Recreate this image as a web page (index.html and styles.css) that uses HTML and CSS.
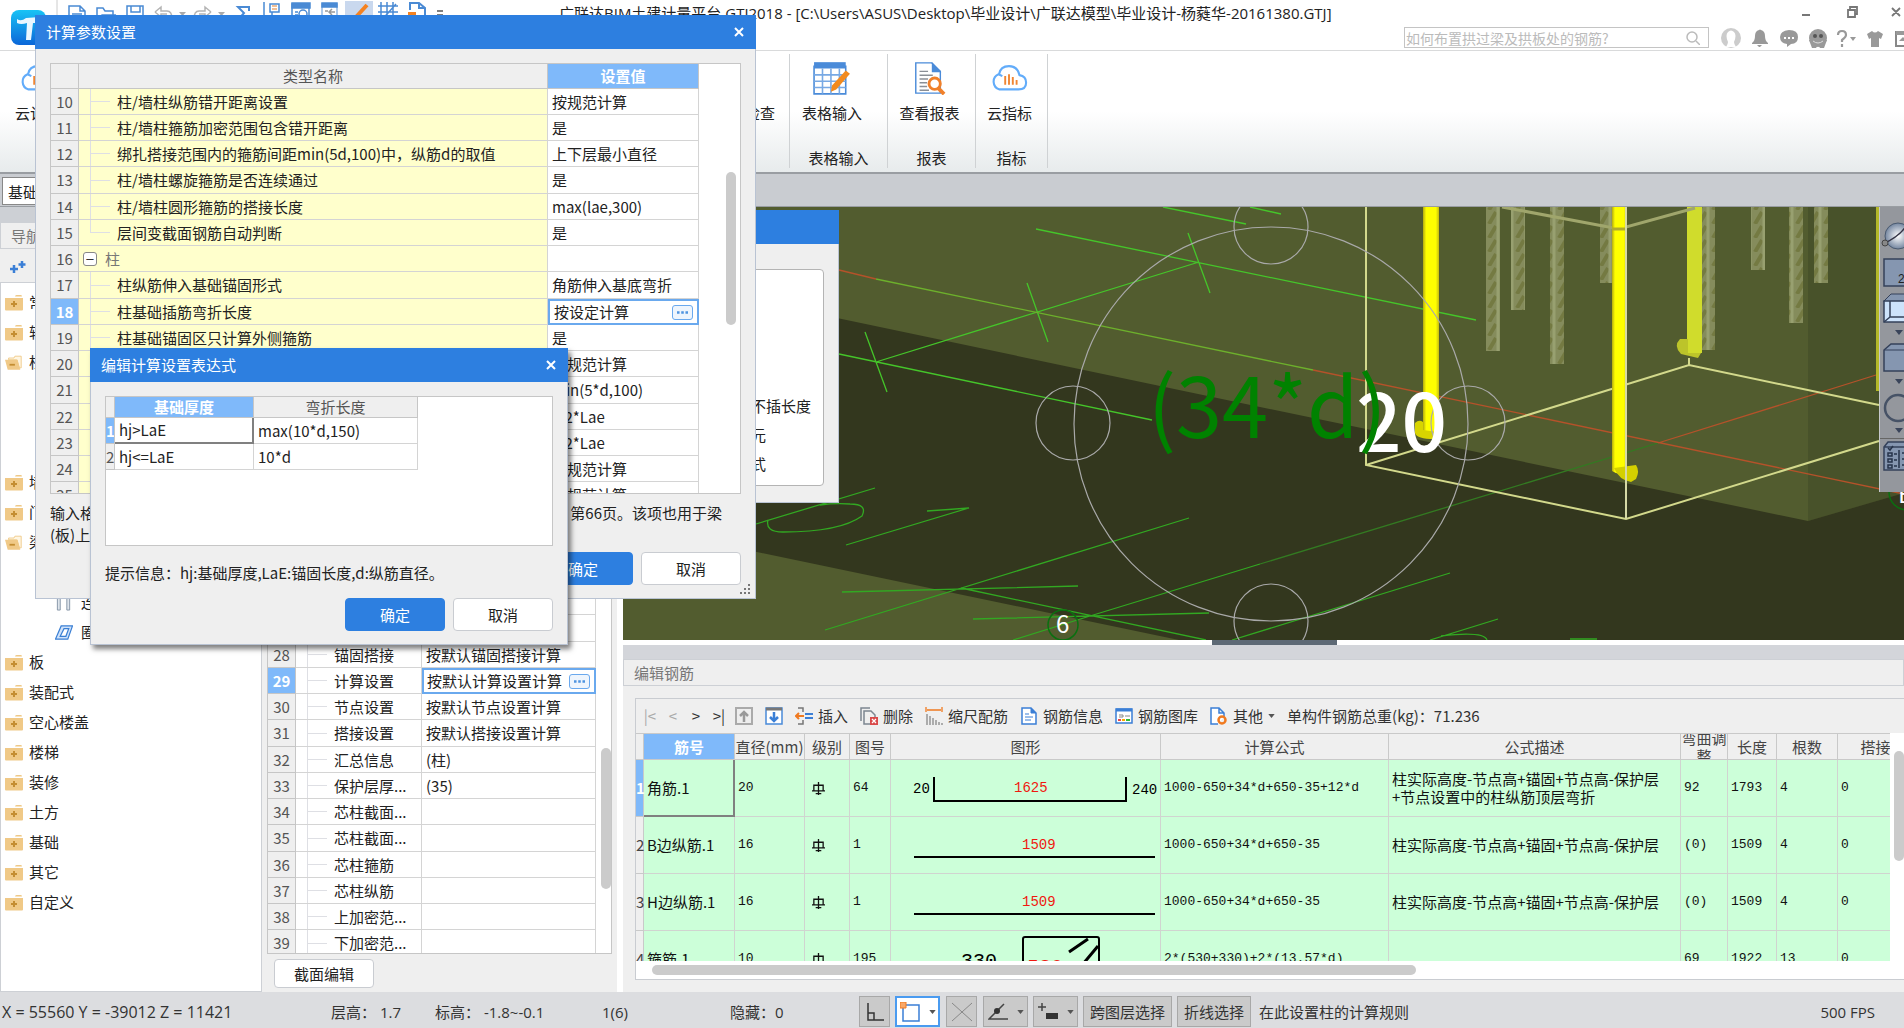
FILE: index.html
```html
<!DOCTYPE html>
<html lang="zh-CN">
<head>
    <meta charset="UTF-8">
    <meta name="viewport" content="width=device-width, initial-scale=1.0">
    <title>广联达BIM土建计量平台 GTJ2018</title>
    <link rel="stylesheet" href="styles.css">
</head>
<body>
    <svg class="defs" aria-hidden="true">
        <symbol id="folder" viewBox="0 0 18 16"><path d="M10 2q0-1.500 1.500-1.500h4.500q1 0 1 1.500z" fill="#efc988"/><path d="M0 3.500h18V15q0 1-1 1H1q-1 0-1-1z" fill="#f0c987"/><path d="M9 6.500v6M6 9.500h6" stroke="#c48d32" stroke-width="2"/></symbol>
        <symbol id="folder-open" viewBox="0 0 20 16"><path d="M4 3h6l1-2h7v13h-2L13 5H4z" fill="#fff6e2" stroke="#efc988"/><path d="M0 5h14l3 11H3z" fill="#f0c987"/><path d="M5 10.500h6" stroke="#c48d32" stroke-width="2"/></symbol>
        <symbol id="rebar" viewBox="0 0 14 14"><path d="M7 0v14M2 3.500h10v6H2zM0 9.500h14M4 12.500h6" fill="none" stroke="#111" stroke-width="1.400"/></symbol>
        <symbol id="caret" viewBox="0 0 8 5"><path d="M0 0h8L4 5z" fill="currentColor"/></symbol>
        <symbol id="dots" viewBox="0 0 13 3"><path d="M0 0h3v3H0zM5 0h3v3H5zM10 0h3v3h-3z" fill="#4f94e0"/></symbol>
        <symbol id="cloud" viewBox="0 0 40 28"><path d="M12 26H10A8.500 8.500 0 0 1 9 10Q11 11 13 12M9.500 10Q11 1.500 20 1.500T31 11Q38 12 38 19T30 26H11" fill="none" stroke="#62acfa" stroke-width="2.200"/><path d="M16 12v9M20 10v11M24 13v8M28 16v5" stroke="#f08532" stroke-width="2"/></symbol>
    </svg>

    <header class="titlebar">
        <svg class="logo" viewBox="0 0 35 35"><defs><linearGradient id="lg" x2="0" y2="1"><stop stop-color="#18c3f5"/><stop offset="1" stop-color="#0b66d8"/></linearGradient></defs><rect width="35" height="35" rx="8" fill="url(#lg)"/><path d="M6 9q4 3 9-1l14-1v6h-7l-2 17h-5l1-17q-6 2-10 0z" fill="#e9f6ff"/></svg>
        <svg class="quick" viewBox="56 0 390 30" fill="none" stroke="#4a8ad4" stroke-width="1.500">
            <path d="M57 0v30" stroke="#ccc" stroke-width="1"/>
            <path d="M69 6h11l5 5v12H69zM80 6v5h5M72 14h10"/>
            <path d="M97 22V8h6l2 3h8v4M97 22l5-7h13l-3 7z"/>
            <path d="M127 6h16v17h-16zM131 6v6h9V6"/>
            <path d="M155 12l6-5v4h6q5 0 5 8M155 12l6 5v-3h6M211 12l-6-5v4h-6q-5 0-5 8M211 12l-6 5v-3h-6" stroke="#b5b5b5"/>
            <path d="M179 12h7l-3.500 4zM218 12h7l-3.500 4z" fill="#aaa" stroke="none"/>
            <path d="M249 11V7h-11l6 6-6 7h11v-4" stroke-width="2"/>
            <path d="M264 2v24M270 4h9v8h-9zM272 12v8"/><path d="M272 6h5M272 9h5" stroke="#e08030" stroke-width="1.200"/>
            <path d="M292 4h17v18h-17z"/><path d="M292 3h18v5h-18z" fill="#4a8ad4"/><circle cx="303" cy="14" r="4"/><path d="M295 12h3M295 15h3"/>
            <path d="M322 4h15v18h-15z" stroke="#92b8e2"/><path d="M322 3h15v4h-15z" fill="#4a8ad4"/><path d="M330 12h5M325 11h3M332 9l-3 3 3 3" stroke="#999"/>
            <path d="M345 1h28v28h-28z" fill="#c9d8ee" stroke="none"/><path d="M367 5L356 17" stroke="#f58220" stroke-width="4"/>
            <path d="M381 2v24M387 2v24M393 2v24M378 6h20M378 12h20M380 22L396 4"/>
            <path d="M410 10V3h9l6 5v12M419 3v5h6" stroke-width="2"/><path d="M408 12h8v6h-8z" fill="#f58220" stroke="none"/>
            <path d="M437 11h6M437 15h6" stroke="#555"/>
        </svg>
        <h1>广联达BIM土建计量平台 GTJ2018 - [C:\Users\ASUS\Desktop\毕业设计\广联达模型\毕业设计-杨蕤华-20161380.GTJ]</h1>
        <div class="window-tools">
            <svg class="winctl" viewBox="1800 5 104 14" fill="none" stroke="#777" stroke-width="1.800"><path d="M1802 15h8M1848 10h7v7h-7zM1850 10V7h7v7h-2M1892 8l8 8M1900 8l-8 8"/></svg>
            <div class="tool-row">
                <form class="search"><input type="text" aria-label="搜索" placeholder="如何布置拱过梁及拱板处的钢筋?"><svg viewBox="0 0 14 14" fill="none" stroke="#bbb" stroke-width="1.500"><circle cx="6" cy="6" r="5"/><path d="M10 10l4 4"/></svg></form>
                <svg class="account" viewBox="1720 26 184 23" fill="#999">
                    <circle cx="1731" cy="37" r="10" fill="#ccc"/><path d="M1726 46q2-3 2-5-3-7 0-10 3-3 6 0 3 3 0 10 0 2 2 5z" fill="#fff"/>
                    <path d="M1752 42q3-2 3-7 0-5 4-6 1-1 2 0 4 1 4 6 0 5 3 7v1h-16zM1757 44h5l-2 2h-1z"/>
                    <path d="M1789 29q9 0 9 7t-7 7l-4 3v-3q-7-1-7-7t9-7z"/><path d="M1784 37h2M1788 37h2M1792 37h2" stroke="#fff" stroke-width="2"/>
                    <circle cx="1818" cy="37" r="9"/><path d="M1809 39h18l-3 8h-4l-2-3-2 3h-4z"/><circle cx="1815" cy="35" r="2" fill="#555"/><circle cx="1821" cy="35" r="2" fill="#555"/><path d="M1813 40q5 4 10 0" stroke="#ddd" fill="none"/>
                    <path d="M1838 34q0-4 4-4t4 4q0 2-4 5v2M1842 43v3" fill="none" stroke="#999" stroke-width="2.200"/><path d="M1850 36h6l-3 4z"/>
                    <path d="M1867 33l5-3q3 3 6 0l5 3-2 5-2-1v9h-8v-9l-2 1z"/>
                    <path d="M1896 31h16v14h-16z" fill="none" stroke="#888" stroke-width="2"/><path d="M1896 30h10v4h-10zM1899 40l4-4 4 4z"/>
                </svg>
            </div>
        </div>
    </header>

    <nav class="ribbon">
        <section class="group first">
            <button class="cmd"><svg class="ico"><use href="#cloud"/></svg><span>云计算</span></button>
            <button class="cmd"><span>云检查</span></button>
        </section>
        <section class="group wide">
            <button class="cmd"><svg class="ico" viewBox="0 0 36 32"><path d="M1 5h30v26H1z" fill="#fff" stroke="#4a8bd9" stroke-width="1.500"/><path d="M1 1h30v6H1z" fill="#4a8bd9"/><path d="M1 13h30M1 19h30M1 25h30M9 7v24M17 7v24M25 7v24" stroke="#78a9e4" stroke-width="1.500"/><path d="M31 9l4 3-13 15-5 2 1-6z" fill="#f28a1e"/></svg><span>表格输入</span></button>
            <h2>表格输入</h2>
        </section>
        <section class="group mid">
            <button class="cmd"><svg class="ico" viewBox="0 0 36 36"><path d="M4 2h17l9 9v23H4z" fill="#fff" stroke="#4a8bd9" stroke-width="1.500"/><path d="M21 1v11h10z" fill="#4a8bd9"/><path d="M8 11h9M8 15h14M8 19h9M8 23h8M8 27h8M8 31h10" stroke="#8a8f96" stroke-width="1.500"/><circle cx="24" cy="24" r="6" fill="#fff" stroke="#f0802a" stroke-width="3"/><path d="M28 29l6 6" stroke="#f0802a" stroke-width="4"/></svg><span>查看报表</span></button>
            <h2>报表</h2>
        </section>
        <section class="group last">
            <button class="cmd"><svg class="ico"><use href="#cloud"/></svg><span>云指标</span></button>
            <h2>指标</h2>
        </section>
    </nav>

    <div class="floor-bar"><select aria-label="楼层"><option>基础层</option></select></div>

    <main class="workspace">
        <aside class="nav-tree">
            <h2 class="panel-title">导航树</h2>
            <div class="nav-tools"><svg viewBox="0 0 16 12"><path d="M4 4v8M0 8h8M12 0v7M8.500 3.500h7" stroke="#3b7fd6" stroke-width="2.500"/></svg></div>
            <ul>
                <li><svg><use href="#folder"/></svg>常用</li>
                <li><svg><use href="#folder"/></svg>轴线</li>
                <li><svg><use href="#folder-open"/></svg>柱</li>
                <li class="child">柱</li>
                <li class="child">构造柱</li>
                <li class="child">砌体柱</li>
                <li><svg><use href="#folder"/></svg>墙</li>
                <li><svg><use href="#folder"/></svg>门窗洞</li>
                <li><svg><use href="#folder-open"/></svg>梁</li>
                <li class="child">梁</li>
                <li class="child"><svg viewBox="0 0 18 18"><path d="M2 0h3v17H2zM12 0h3v17h-3z" fill="#dfe5ec" stroke="#8494a6"/></svg>连梁</li>
                <li class="child"><svg viewBox="0 0 18 18"><path d="M6 2h12l-5 14H0zM9 5h5l-3 8H5z" fill="#cfe2fa" fill-rule="evenodd" stroke="#3a7fd4" stroke-width="1.300"/></svg>圈梁</li>
                <li><svg><use href="#folder"/></svg>板</li>
                <li><svg><use href="#folder"/></svg>装配式</li>
                <li><svg><use href="#folder"/></svg>空心楼盖</li>
                <li><svg><use href="#folder"/></svg>楼梯</li>
                <li><svg><use href="#folder"/></svg>装修</li>
                <li><svg><use href="#folder"/></svg>土方</li>
                <li><svg><use href="#folder"/></svg>基础</li>
                <li><svg><use href="#folder"/></svg>其它</li>
                <li><svg><use href="#folder"/></svg>自定义</li>
            </ul>
        </aside>

        <aside class="props">
            <div class="props-grid">
                <table class="sheet">
                    <colgroup><col class="p0"><col class="p1"><col class="p2"></colgroup>
                    <tbody>
                        <tr><th></th><td></td><td></td></tr>
                        <tr><th></th><td></td><td></td></tr>
                        <tr><th></th><td></td><td></td></tr>
                        <tr><th>27</th><td></td><td></td></tr>
                        <tr><th>28</th><td class="leaf">锚固搭接</td><td>按默认锚固搭接计算</td></tr>
                        <tr class="active"><th>29</th><td class="leaf">计算设置</td><td class="edit"><div><span>按默认计算设置计算</span><button class="more" aria-label="更多"><svg><use href="#dots"/></svg></button></div></td></tr>
                        <tr><th>30</th><td class="leaf">节点设置</td><td>按默认节点设置计算</td></tr>
                        <tr><th>31</th><td class="leaf">搭接设置</td><td>按默认搭接设置计算</td></tr>
                        <tr><th>32</th><td class="leaf">汇总信息</td><td>(柱)</td></tr>
                        <tr><th>33</th><td class="leaf">保护层厚...</td><td>(35)</td></tr>
                        <tr><th>34</th><td class="leaf">芯柱截面...</td><td></td></tr>
                        <tr><th>35</th><td class="leaf">芯柱截面...</td><td></td></tr>
                        <tr><th>36</th><td class="leaf">芯柱箍筋</td><td></td></tr>
                        <tr><th>37</th><td class="leaf">芯柱纵筋</td><td></td></tr>
                        <tr><th>38</th><td class="leaf">上加密范...</td><td></td></tr>
                        <tr><th>39</th><td class="leaf">下加密范...</td><td></td></tr>
                    </tbody>
                </table>
                <div class="vtrack"><i></i></div>
            </div>
            <div class="props-foot"><button class="btn small">截面编辑</button></div>
        </aside>

        <div class="right">
            <div class="view">
                <svg class="scene" viewBox="623 207 1281 433" preserveAspectRatio="xMidYMid slice">
                    <defs>
                        <linearGradient id="bar"><stop stop-color="#b4aa10"/><stop offset=".2" stop-color="#ff0"/><stop offset=".8" stop-color="#ff0"/><stop offset="1" stop-color="#c4ba10"/></linearGradient>
                        <pattern id="rib" width="14" height="14" patternUnits="userSpaceOnUse" x="1486"><path d="M0 0h14v14H0z" fill="#858c5c"/><path d="M3 14L10 2" stroke="#747a42" stroke-width="4"/><path d="M12 0v14" stroke="#98a070" stroke-width="3"/></pattern>
                    </defs>
                    <path d="M623 207h1281v433H623z" fill="#525c2f"/>
                    <path d="M1808 207h96v286l-96 28z" fill="#48522a"/>
                    <path d="M623 273L1260 407 1808 521 1904 493V640H1179L623 524z" fill="#33371e"/>
                    <g fill="url(#rib)">
                        <path d="M1486 207h14v144h-14zM1511 207h14v103h-14zM1550 207h14v157h-14zM1600 207h12v76h-12zM1702 207h13v143h-13zM1751 207h14v63h-14zM1789 207h14v116h-14zM1814 207h14v76h-14z"/>
                    </g>
                    <g fill="none" stroke="#45c52a" stroke-width="1.300">
                        <path d="M1163 207L1246 224M1250 207L1281 214M1036 229L1476 320M1188 233L1210 293M876 362L1199 262M1027 283L1048 342M865 332L887 392M839 354L1152 420"/>
                        <path d="M876 279L1313 370" stroke="#6db02c"/>
                    </g>
                    <g fill="none" stroke="#32a822" stroke-width="1.300">
                        <path d="M756 524L875 488M768 520Q765 532 783 532Q840 532 862 516Q868 504 850 504Q835 503 820 505M846 545L969 508 927 511M825 630L1189 518M842 592L1078 586M961 588L1206 640M973 619L1209 613M1013 640L1090 616 1260 564M1232 640L1450 573M1430 640L1498 619M1441 636Q1484 631 1487 640M1570 639h27"/>
                        <path d="M1260 564L1658 443" stroke="#337a22"/>
                    </g>
                    <path d="M839 270L876 279M1313 370L1904 494M1658 443L1876 375" fill="none" stroke="#b5522a" stroke-width="1.300"/>
                    <path d="M1876 207h3v184h-3z" fill="#b4b82a"/>
                    <path d="M1687 207h15v146h-15z" fill="#d0dc2c"/><path d="M1680 339h8v14h13l-3 5-17-4q-8-8-1-15z" fill="#bcc42a"/>
                    <path d="M1423 207h16v230h-16z" fill="url(#bar)"/><path d="M1415 423q4-4 8-1v8l14 2-3 7q-17 0-19-6z" fill="#d8d400"/>
                    <g fill="none" stroke="#d3d98c" stroke-width="2">
                        <path d="M1366 207V465L1626 519 1879 441M1366 465L1689 365 1879 405M1689 358v7"/>
                    </g>
                    <path d="M1502 207L1619 229 1695 208" fill="none" stroke="#a0a66c" stroke-width="3"/>
                    <path d="M1612 207h15v265q-8 4-15-1z" fill="url(#bar)"/><path d="M1614 468l22-3q4 6 0 14l-5 3q-12-2-17-14z" fill="#d4d000"/>
                    <path d="M1612 229h14" stroke="#b0aa30" stroke-width="3"/>
                    <path d="M1626 207v312" stroke="#d6d9a6" stroke-width="2"/>
                    <g fill="none" stroke="#a9a9a9" stroke-width="1.200"><circle cx="1271" cy="424" r="197"/><circle cx="1073" cy="423" r="37"/><circle cx="1468" cy="423" r="37"/><circle cx="1271" cy="227" r="37"/><circle cx="1271" cy="621" r="37"/></g>
                    <circle cx="1063" cy="625" r="15" fill="none" stroke="#0a7010" stroke-width="1.500"/>
                    <circle cx="1907" cy="492" r="18" fill="none" stroke="#0a7010" stroke-width="1.500"/>
                    <text x="1356" y="452" class="dim white">20</text>
                    <text x="1148" y="438" class="dim green">(34*d)</text>
                    <text x="1056" y="633" class="axis">6</text>
                    <text x="1898" y="503" class="axis">B</text>
                </svg>
                <div class="palette">
                    <button aria-label="动态观察"><svg viewBox="0 0 40 34"><defs><radialGradient id="ball"><stop stop-color="#fff"/><stop offset="1" stop-color="#7486a0"/></radialGradient></defs><circle cx="18" cy="16" r="13" fill="url(#ball)" stroke="#4a5a70"/><path d="M3 24Q20 16 26 6" stroke="#334" fill="none" stroke-width="1.500"/><circle cx="5" cy="23" r="3" fill="#888" stroke="#444"/></svg></button>
                    <button aria-label="二维"><svg viewBox="0 0 40 34"><path d="M4 3h32v27H4z" fill="#8596b0" stroke="#34415a" stroke-width="1.500"/><text x="18" y="27" class="pal-text">2D</text></svg></button>
                    <button aria-label="视图"><svg viewBox="0 0 40 34"><path d="M4 9l7-7h30v8H4z" fill="#8596b0" stroke="#34415a"/><path d="M4 9h36v21H4z" fill="#cde3fb" stroke="#34415a" stroke-width="1.500"/><path d="M10 9v16h30M4 30l6-5" fill="none" stroke="#34415a" stroke-width="1.500"/></svg><svg class="tri"><use href="#caret"/></svg></button>
                    <button aria-label="着色"><svg viewBox="0 0 40 34"><path d="M4 9l7-6h30v27H4z" fill="#8596b0" stroke="#34415a" stroke-width="1.500"/><path d="M4 9h36" stroke="#34415a"/></svg><svg class="tri"><use href="#caret"/></svg></button>
                    <button aria-label="旋转"><svg viewBox="0 0 40 34"><circle cx="18" cy="18" r="13" fill="none" stroke="#465266" stroke-width="2.500"/></svg><svg class="tri"><use href="#caret"/></svg></button>
                    <button class="split" aria-label="显示设置"><svg viewBox="0 0 40 34"><path d="M4 7l4-5h32v28H4zM4 7h36" fill="#8596b0" stroke="#34415a" stroke-width="1.500"/><path d="M8 13h4v3H8zM8 19h4v3H8zM8 25h4v3H8zM14 14h3M14 20h3M14 26h3M19 10v18M22 13h4M22 19h4M22 25h4M8 8l2 2 3-4" fill="none" stroke="#26334a" stroke-width="1.500"/></svg></button>
                </div>
            </div>
            <div class="splitter"><i></i></div>

            <section class="rebar-panel">
                <h2 class="panel-title">编辑钢筋</h2>
                <div class="rebar-box">
                    <div class="rebar-tools">
                        <div class="steps"><button class="off" aria-label="首条">|&lt;</button><button class="off" aria-label="上一条">&lt;</button><button aria-label="下一条">&gt;</button><button aria-label="末条">&gt;|</button></div>
                        <button aria-label="上移"><svg viewBox="0 0 18 18"><path d="M1 1h16v16H1z" fill="#eee" stroke="#aaa" stroke-width="2"/><path d="M9 15V6M5 9l4-4 4 4" fill="none" stroke="#999" stroke-width="2.500"/></svg></button>
                        <button aria-label="下移"><svg viewBox="0 0 18 18"><path d="M1 1h16v16H1z" fill="#fff" stroke="#4a8bd9" stroke-width="1.500"/><path d="M1 2h16" stroke="#777" stroke-width="3"/><path d="M9 5v9M5 10l4 4 4-4" fill="none" stroke="#3b7fd6" stroke-width="2.500"/></svg></button>
                        <button><svg viewBox="0 0 18 18"><path d="M3 1h5v4M3 17h5v-4" fill="none" stroke="#777" stroke-width="1.500"/><path d="M1 9h8M4 6L1 9l3 3" fill="none" stroke="#f07a20" stroke-width="2"/><path d="M10 7h8M10 11h8" stroke="#3b7fd6" stroke-width="2"/></svg>插入</button>
                        <button><svg viewBox="0 0 18 18"><path d="M1 14V1h9M4 4h7l4 4v9H4z" fill="none" stroke="#7d8791" stroke-width="1.500"/><path d="M10 10h8v8h-8z" fill="#d94a4a"/><path d="M12 12l4 4M16 12l-4 4" stroke="#fff" stroke-width="1.300"/></svg>删除</button>
                        <button><svg viewBox="0 0 18 18"><path d="M1 0v5M17 0v5M2 3h14" stroke="#f07a20" stroke-width="1.300"/><path d="M2 7v11M5 9v9M8 11v7M11 13v5M14 15v3M17 16v2" stroke="#888" stroke-width="1.300"/></svg>缩尺配筋</button>
                        <button><svg viewBox="0 0 18 18"><path d="M2 1h9l5 5v11H2z" fill="#fff" stroke="#3b7fd6" stroke-width="1.500"/><path d="M11 1v5h5zM5 7h4M5 10h8M5 13h6" stroke="#3b7fd6" fill="#3b7fd6"/></svg>钢筋信息</button>
                        <button><svg viewBox="0 0 18 18"><path d="M1 2h16v14H1z" fill="#fff" stroke="#3b7fd6" stroke-width="1.500"/><path d="M1 3h16" stroke="#3b7fd6" stroke-width="3"/><path d="M4 8h4v2H4M10 9h5" stroke="#888" fill="none"/><path d="M3 13h3" stroke="#e44" stroke-width="2"/><path d="M7 13h3" stroke="#fa0" stroke-width="2"/><path d="M11 13h4" stroke="#3b3" stroke-width="2"/></svg>钢筋图库</button>
                        <button><svg viewBox="0 0 18 18"><path d="M8 17H1V1h8l5 5v4M9 1v5h5" fill="#fff" stroke="#3b7fd6" stroke-width="1.500"/><circle cx="12" cy="13" r="3.500" fill="none" stroke="#f07a20" stroke-width="2.500"/></svg>其他<svg class="caret"><use href="#caret"/></svg></button>
                        <span>单构件钢筋总重(kg)：71.236</span>
                    </div>
                    <div class="rebar-scroll">
                        <div class="clip">
                            <table class="rebar">
                                <colgroup><col class="c0"><col class="c1"><col class="c2"><col class="c3"><col class="c4"><col class="c5"><col class="c6"><col class="c7"><col class="c8"><col class="c9"><col class="c10"><col class="c11"></colgroup>
                                <thead><tr><th></th><th class="on">筋号</th><th>直径(mm)</th><th>级别</th><th>图号</th><th>图形</th><th>计算公式</th><th>公式描述</th><th><div class="two">弯曲调整</div></th><th>长度</th><th>根数</th><th>搭接</th></tr></thead>
                                <tbody>
                                    <tr><th class="on">1</th><td class="cur">角筋.1</td><td class="num">20</td><td><svg class="grade"><use href="#rebar"/></svg></td><td class="num">64</td>
                                        <td class="shape"><svg viewBox="890 759 270 56"><path d="M933 776v24h192v-24" fill="none" stroke="#000" stroke-width="2"/><text x="912" y="792">20</text><text x="1013" y="791" class="red">1625</text><text x="1131" y="793">240</text></svg></td>
                                        <td class="num">1000-650+34*d+650-35+12*d</td><td class="desc">柱实际高度-节点高+锚固+节点高-保护层<br>+节点设置中的柱纵筋顶层弯折</td><td class="num">92</td><td class="num">1793</td><td class="num">4</td><td class="num">0</td></tr>
                                    <tr><th>2</th><td>B边纵筋.1</td><td class="num">16</td><td><svg class="grade"><use href="#rebar"/></svg></td><td class="num">1</td>
                                        <td class="shape"><svg viewBox="890 817 270 56"><path d="M913 857h241" stroke="#000" stroke-width="2"/><text x="1021" y="849" class="red">1509</text></svg></td>
                                        <td class="num">1000-650+34*d+650-35</td><td class="desc">柱实际高度-节点高+锚固+节点高-保护层</td><td class="num">(0)</td><td class="num">1509</td><td class="num">4</td><td class="num">0</td></tr>
                                    <tr><th>3</th><td>H边纵筋.1</td><td class="num">16</td><td><svg class="grade"><use href="#rebar"/></svg></td><td class="num">1</td>
                                        <td class="shape"><svg viewBox="890 817 270 56"><path d="M913 857h241" stroke="#000" stroke-width="2"/><text x="1021" y="849" class="red">1509</text></svg></td>
                                        <td class="num">1000-650+34*d+650-35</td><td class="desc">柱实际高度-节点高+锚固+节点高-保护层</td><td class="num">(0)</td><td class="num">1509</td><td class="num">4</td><td class="num">0</td></tr>
                                    <tr><th>4</th><td>箍筋.1</td><td class="num">10</td><td><svg class="grade"><use href="#rebar"/></svg></td><td class="num">195</td>
                                        <td class="shape"><svg viewBox="890 931 270 56"><rect x="1022" y="937" width="76" height="48" rx="2" fill="none" stroke="#000" stroke-width="2"/><path d="M1087 939L1068 952M1097 946L1082 964" stroke="#000" stroke-width="3"/><text x="960" y="967" class="big">330</text><text x="1026" y="973" class="big red">530</text></svg></td>
                                        <td class="num">2*(530+330)+2*(13.57*d)</td><td></td><td class="num">69</td><td class="num">1922</td><td class="num">13</td><td class="num">0</td></tr>
                                </tbody>
                            </table>
                        </div>
                        <div class="vtrack"><i></i></div>
                    </div>
                    <div class="htrack"><i></i></div>
                </div>
            </section>
        </div>
    </main>

    <footer class="status">
        <span class="coords">X = 55560 Y = -39012 Z = 11421</span>
        <span class="floor">层高： 1.7</span>
        <span class="level">标高： -1.8~-0.1</span>
        <span class="count">1(6)</span>
        <span class="hidden-count">隐藏：0</span>
        <div class="modes">
            <button aria-label="正交"><svg viewBox="0 0 20 20" fill="none" stroke="#333" stroke-width="1.500"><path d="M3 1v17h16M3 11h6v7"/></svg></button>
            <button class="on" aria-label="捕捉"><svg viewBox="0 0 20 20"><path d="M3 3h16v16H3z" fill="#fff" stroke="#3b7fd6" stroke-width="1.500"/><path d="M0 0h6v6H0z" fill="#f9a869" stroke="#f07a20"/></svg><svg class="caret"><use href="#caret"/></svg></button>
            <button class="dim-btn" aria-label="交点"><svg viewBox="0 0 20 20"><path d="M0 1l20 18M20 1L0 19" stroke="#888"/></svg></button>
            <button aria-label="角度"><svg viewBox="0 0 20 20"><path d="M16 2L1 17h19" fill="none" stroke="#444" stroke-width="1.500"/><circle cx="9" cy="9" r="3" fill="#333"/></svg><svg class="caret"><use href="#caret"/></svg></button>
            <button aria-label="偏移"><svg viewBox="0 0 20 20"><path d="M4 1v8M0 5h8" stroke="#444" stroke-width="1.500"/><path d="M8 11h12v6H8z" fill="#333"/></svg><svg class="caret"><use href="#caret"/></svg></button>
            <button class="word">跨图层选择</button>
            <button class="word">折线选择</button>
        </div>
        <span class="tip">在此设置柱的计算规则</span>
        <span class="fps">500 FPS</span>
    </footer>

    <section class="dialog back">
        <header><h2>输出设置</h2></header>
        <div class="frame"><p>不插长度</p><p>元</p><p>式</p></div>
    </section>

    <section class="dialog params">
        <header><h2>计算参数设置</h2><button class="close" aria-label="关闭"><svg viewBox="0 0 10 10"><path d="M1 1l8 8M9 1l-8 8" stroke="#fff" stroke-width="2"/></svg></button></header>
        <div class="params-grid">
            <table class="sheet yellow">
                <thead><tr><th></th><th>类型名称</th><th class="on">设置值</th></tr></thead>
                <tbody>
                    <tr><th>10</th><td class="leaf">柱/墙柱纵筋错开距离设置</td><td>按规范计算</td></tr>
                    <tr><th>11</th><td class="leaf">柱/墙柱箍筋加密范围包含错开距离</td><td>是</td></tr>
                    <tr><th>12</th><td class="leaf">绑扎搭接范围内的箍筋间距min(5d,100)中，纵筋d的取值</td><td>上下层最小直径</td></tr>
                    <tr><th>13</th><td class="leaf">柱/墙柱螺旋箍筋是否连续通过</td><td>是</td></tr>
                    <tr><th>14</th><td class="leaf">柱/墙柱圆形箍筋的搭接长度</td><td>max(lae,300)</td></tr>
                    <tr><th>15</th><td class="leaf end">层间变截面钢筋自动判断</td><td>是</td></tr>
                    <tr><th>16</th><td class="branch"><i>−</i>柱</td><td></td></tr>
                    <tr><th>17</th><td class="leaf">柱纵筋伸入基础锚固形式</td><td>角筋伸入基底弯折</td></tr>
                    <tr class="active"><th>18</th><td class="leaf">柱基础插筋弯折长度</td><td class="edit"><div><span>按设定计算</span><button class="more" aria-label="更多"><svg><use href="#dots"/></svg></button></div></td></tr>
                    <tr><th>19</th><td class="leaf">柱基础锚固区只计算外侧箍筋</td><td>是</td></tr>
                    <tr><th>20</th><td class="leaf"></td><td>按规范计算</td></tr>
                    <tr><th>21</th><td class="leaf"></td><td>min(5*d,100)</td></tr>
                    <tr><th>22</th><td class="leaf"></td><td>1.2*Lae</td></tr>
                    <tr><th>23</th><td class="leaf"></td><td>1.2*Lae</td></tr>
                    <tr><th>24</th><td class="leaf"></td><td>按规范计算</td></tr>
                    <tr><th>25</th><td class="leaf"></td><td>按规范计算</td></tr>
                </tbody>
            </table>
            <div class="vtrack"><i></i></div>
        </div>
        <p class="note"><span>输入格式<br>(板)上部</span><span>第66页。该项也用于梁</span></p>
        <div class="actions"><button class="btn primary">确定</button><button class="btn">取消</button></div>
        <svg class="grip" viewBox="0 0 11 11" fill="#777"><path d="M8 0h2v2H8zM8 4h2v2H8zM8 8h2v2H8zM4 4h2v2H4zM4 8h2v2H4zM0 8h2v2H0z"/></svg>
    </section>

    <section class="dialog expr">
        <header><h2>编辑计算设置表达式</h2><button class="close" aria-label="关闭"><svg viewBox="0 0 10 10"><path d="M1 1l8 8M9 1l-8 8" stroke="#fff" stroke-width="2"/></svg></button></header>
        <div class="expr-grid">
            <table class="sheet">
                <thead><tr><th></th><th class="on">基础厚度</th><th>弯折长度</th></tr></thead>
                <tbody>
                    <tr><th class="on">1</th><td class="cur">hj&gt;LaE</td><td>max(10*d,150)</td></tr>
                    <tr><th>2</th><td>hj&lt;=LaE</td><td>10*d</td></tr>
                </tbody>
            </table>
        </div>
        <p class="hint">提示信息：hj:基础厚度,LaE:锚固长度,d:纵筋直径。</p>
        <div class="actions"><button class="btn primary">确定</button><button class="btn">取消</button></div>
    </section>
</body>
</html>
```
FILE: styles.css
```css
* {
    box-sizing: border-box;
}
body {
    margin: 0;
    height: 100vh;
    display: flex;
    flex-direction: column;
    overflow: hidden;
    background: #efefef;
    color: #222;
    font: 15px/20px "Noto Sans CJK SC", sans-serif;
}
h1, h2, p, ul {
    margin: 0;
    padding: 0;
    font-size: 15px;
    font-weight: normal;
    list-style: none;
}
button, input, select {
    font: inherit;
    color: inherit;
}
button {
    padding: 0;
    border: none;
    background: none;
}
svg {
    flex: none;
}
.defs {
    position: absolute;
    width: 0;
    height: 0;
}

/* title bar */
.titlebar {
    display: flex;
    height: 51px;
    flex: none;
    background: #fff;
    border-bottom: 1px solid #d9dadb;
}
.logo {
    width: 35px;
    height: 35px;
    margin: 10px 10px 0 11px;
}
.quick {
    width: 390px;
    height: 30px;
}
.titlebar h1 {
    flex: 1;
    margin: 3px 0 0 113px;
    font-family: "Open Sans", "Noto Sans CJK SC", sans-serif;
    white-space: nowrap;
}
.window-tools {
    width: 500px;
    display: flex;
    flex-direction: column;
    align-items: flex-end;
}
.winctl {
    width: 104px;
    height: 14px;
    margin: 5px 0 8px;
}
.tool-row {
    display: flex;
    gap: 11px;
}
.search {
    display: flex;
    align-items: center;
    width: 305px;
    height: 21px;
    padding-right: 8px;
    border: 1px solid #c4c4c4;
}
.search input {
    flex: 1;
    height: 19px;
    padding: 0 1px;
    border: none;
    background: none;
    font-size: 14px;
}
.search input::placeholder {
    color: #bbb;
}
.search svg {
    width: 14px;
    height: 14px;
}
.account {
    width: 184px;
    height: 23px;
}

/* ribbon */
.ribbon {
    display: flex;
    flex: none;
    height: 123px;
    padding: 3px 0 4px;
    background: linear-gradient(#fff 50%, #e7ebec);
    border-bottom: 2px solid #999da2;
}
.group {
    display: flex;
    flex-direction: column;
    align-items: center;
    justify-content: space-between;
    border-right: 1px solid #cfd2d4;
    padding: 7px 0 0;
}
.group.first {
    width: 790px;
    flex-direction: row;
    align-items: flex-start;
    padding: 7px 14px 0 15px;
}
.group.first .cmd:last-child {
    padding-top: 42px;
}
.wide {
    width: 98px;
}
.mid {
    width: 88px;
}
.last {
    width: 72px;
}
.cmd {
    display: flex;
    flex-direction: column;
    align-items: center;
    gap: 8px;
}
.wide .cmd {
    margin-right: 13px;
}
.mid .cmd, .last .cmd {
    margin-right: 4px;
}
.ico {
    width: 38px;
    height: 34px;
}

.floor-bar {
    flex: none;
    height: 33px;
    padding: 3px 2px;
    background: #c9ccd1;
    border-bottom: 1px solid #999da2;
}
.floor-bar select {
    width: 130px;
    height: 28px;
    padding: 0 1px;
    border: 1px solid #888;
    background: #fff;
}

.workspace {
    display: flex;
    flex: 1;
    min-height: 0;
}
.panel-title {
    height: 27px;
    flex: none;
    padding: 3px 10px;
    background: #efefef;
    border: 1px solid #cdd0d5;
    color: #777;
}

/* navigation tree */
.nav-tree {
    display: flex;
    flex-direction: column;
    width: 262px;
    flex: none;
    padding-top: 15px;
    background: #cdd0d5;
}
.nav-tools {
    padding: 12px 10px;
    height: 34px;
    background: #efefef;
    border-bottom: 1px solid #cdd0d5;
}
.nav-tools svg {
    display: block;
    width: 16px;
    height: 12px;
}
.nav-tree ul {
    flex: 1;
    padding: 4px 4px;
    background: #fff;
    border: 1px solid #cdd0d5;
    border-top: none;
}
.nav-tree li {
    display: flex;
    align-items: center;
    gap: 6px;
    height: 30px;
}
.nav-tree li svg {
    width: 18px;
    height: 17px;
}
.nav-tree .child {
    padding-left: 50px;
    gap: 8px;
}

/* grids */
.sheet {
    border-collapse: separate;
    border-spacing: 0;
    table-layout: fixed;
    background: #fff;
}
.sheet th, .sheet td {
    height: 26px;
    padding: 0 4px;
    border-right: 1px solid #d4d4d4;
    border-bottom: 1px solid #d4d4d4;
    text-align: left;
    font-weight: normal;
    white-space: nowrap;
    overflow: hidden;
}
.sheet tr:nth-child(4n) th, .sheet tr:nth-child(4n) td {
    height: 27px;
}
.sheet th {
    padding: 0;
    background: #efefef;
    border-color: #c6c6c6;
    color: #555;
    text-align: center;
}
.sheet .on, .sheet .active th, .rebar .on {
    background: #7fb9fa;
    color: #fff;
    font-weight: bold;
}
.sheet .leaf {
    background-repeat: no-repeat;
    background-image: linear-gradient(#dedfe4, #dedfe4), linear-gradient(#dedfe4, #dedfe4);
    background-size: 1px 100%, 20px 1px;
    background-position: 11px 0, 11px 50%;
    padding-left: 38px;
}
.sheet .end {
    background-size: 1px 50%, 20px 1px;
}
.yellow .leaf, .yellow .branch {
    background-color: #ffffcc;
}
.sheet .branch {
    color: #777;
}
.branch i {
    display: inline-block;
    width: 14px;
    height: 14px;
    margin-right: 8px;
    border: 1px solid #888;
    border-radius: 3px;
    background: #fff;
    color: #333;
    font-style: normal;
    line-height: 12px;
    text-align: center;
}
.sheet .edit {
    border: 2px solid #6aa9ee;
    padding: 0 4px;
}
.edit div {
    display: flex;
    align-items: center;
    justify-content: space-between;
}
.more {
    display: flex;
    align-items: center;
    justify-content: center;
    width: 21px;
    height: 15px;
    flex: none;
    border: 1px solid #6aa9ee;
    border-radius: 3px;
    background: #eef5fd;
}
.more svg {
    width: 11px;
    height: 3px;
}
.sheet .cur, .rebar .cur {
    border-right: 2px solid #808080;
    border-bottom: 2px solid #808080;
}
.vtrack {
    background: #fff;
}
.vtrack i, .htrack i {
    display: block;
    width: 10px;
    border-radius: 5px;
    background: #cbcbcb;
}

/* properties */
.props {
    display: flex;
    flex-direction: column;
    width: 361px;
    flex: none;
    padding: 0 5px;
    border-right: 6px solid #fff;
}
.props-grid {
    flex: 1;
    min-height: 0;
    display: flex;
    align-items: flex-end;
    overflow: hidden;
    background: #fff;
    border: 1px solid #c6c6c6;
}
.props .sheet {
    width: 328px;
    flex: none;
    margin-bottom: -4px;
}
.p0 { width: 28px; }
.p1 { width: 126px; }
.p2 { width: 174px; }
.props .leaf {
    padding-right: 0;
}
.props .sheet .edit {
    padding: 0 4px 0 3px;
}
.props .vtrack {
    align-self: stretch;
    padding: 540px 5px 0;
}
.props .vtrack i {
    height: 141px;
}
.props-foot {
    height: 38px;
    padding: 5px 7px;
}
.btn {
    width: 100px;
    height: 33px;
    background: #fff;
    border: 1px solid #c9ccd1;
    border-radius: 4px;
}
.btn.small {
    height: 29px;
}
.btn.primary {
    background: #2d7fe0;
    border-color: #2d7fe0;
    color: #fff;
}

/* 3D view */
.right {
    flex: 1;
    min-width: 0;
    display: flex;
    flex-direction: column;
}
.view {
    position: relative;
    flex: 1;
    min-height: 0;
    overflow: hidden;
}
.scene {
    display: block;
    width: 100%;
    height: 100%;
}
.dim {
    font-size: 80px;
}
.white {
    fill: #fff;
    font-weight: 500;
}
.green {
    fill: #008200;
    font-size: 83px;
}
.axis {
    font-size: 24px;
    fill: #fff;
}
.palette {
    position: absolute;
    top: 0;
    right: 0;
    width: 25px;
    height: 285px;
    padding-top: 12px;
    overflow: hidden;
    background: #94979d;
    border-left: 1px solid #c6c8cc;
}
.palette button {
    display: block;
    color: #39445a;
}
.palette svg {
    display: block;
    width: 40px;
    height: 36px;
}
.palette .tri {
    width: 8px;
    height: 5px;
    margin: 3px 15px 5px;
}
.palette .split {
    border-top: 1px solid #666;
}
.pal-text {
    font: 12px "Liberation Sans", sans-serif;
    fill: #222;
}
.splitter {
    height: 5px;
    background: #fff;
}
.splitter i {
    display: block;
    width: 125px;
    height: 5px;
    margin-left: 46%;
    background: #5d6975;
}

/* rebar editor */
.rebar-panel {
    height: 347px;
    flex: none;
    display: flex;
    flex-direction: column;
    padding-top: 14px;
    background: linear-gradient(#d3d5da 14px, #efefef 14px);
}
.rebar-box {
    flex: 1;
    min-height: 0;
    display: flex;
    flex-direction: column;
    margin: 12px 0 12px 12px;
    border: 1px solid #c9ccd1;
    border-right: none;
}
.rebar-tools {
    display: flex;
    align-items: center;
    gap: 12px;
    height: 34px;
    flex: none;
    padding-left: 4px;
    color: #333;
    white-space: nowrap;
}
.rebar-tools button {
    display: flex;
    align-items: center;
    gap: 5px;
}
.steps {
    display: flex;
    gap: 3px;
    margin-right: -6px;
}
.steps button {
    width: 20px;
    justify-content: center;
}
.rebar-tools .off {
    color: #aaa;
}
.rebar-tools svg {
    width: 18px;
    height: 18px;
}
.rebar-tools .caret, .status .caret {
    width: 7px;
    height: 4px;
    color: #555;
}
.rebar-scroll {
    flex: 1;
    min-height: 0;
    display: flex;
}
.clip {
    flex: 1;
    min-width: 0;
    overflow: hidden;
}
.rebar {
    width: 1278px;
    table-layout: fixed;
    border-collapse: separate;
    border-spacing: 0;
}
.c0 { width: 8px; }
.c1 { width: 91px; }
.c2 { width: 70px; }
.c3 { width: 45px; }
.c4 { width: 41px; }
.c5 { width: 270px; }
.c6 { width: 228px; }
.c7 { width: 292px; }
.c8 { width: 47px; }
.c9 { width: 49px; }
.c10 { width: 61px; }
.c11 { width: 76px; }
.rebar th {
    height: 27px;
    padding: 0;
    background: #efefef;
    border: solid #c9c9c9;
    border-width: 0 1px 1px 0;
    color: #444;
    font-weight: normal;
    white-space: nowrap;
}
.rebar thead th {
    border-top-width: 1px;
}
.two {
    display: flex;
    align-items: center;
    height: 25px;
    overflow: hidden;
    line-height: 18px;
    white-space: normal;
}
.rebar td {
    height: 57px;
    padding: 0 3px;
    background: #ccffd9;
    border: solid #d0d4d0;
    border-width: 0 1px 1px 0;
    color: #111;
    white-space: nowrap;
}
.rebar .num {
    font-family: "Liberation Mono", monospace;
    font-size: 13px;
}
.rebar .desc {
    line-height: 18px;
}
.grade {
    display: block;
    width: 13px;
    height: 13px;
    margin-left: 4px;
}
.rebar .shape {
    padding: 0;
}
.shape svg {
    display: block;
    width: 270px;
    height: 56px;
}
.shape text {
    font-family: "Liberation Mono", monospace;
    font-size: 14px;
}
.shape .big {
    font-size: 20px;
}
.shape .red {
    fill: #f01810;
}
.rebar-scroll .vtrack {
    width: 14px;
    padding: 18px 0 0 4px;
}
.rebar-scroll .vtrack i {
    height: 110px;
}
.htrack {
    height: 18px;
    flex: none;
    padding: 4px 0 0 16px;
    background: #fff;
}
.htrack i {
    width: 61%;
    height: 10px;
}

/* status bar */
.status {
    display: flex;
    align-items: center;
    flex: none;
    height: 36px;
    padding: 4px 29px 1px 2px;
    background: #dcdde0;
    color: #333;
    font-family: "Open Sans", "Noto Sans CJK SC", sans-serif;
    white-space: pre;
}
.coords {
    width: 329px;
    font-size: 16px;
}
.floor {
    width: 104px;
}
.level {
    width: 167px;
}
.count {
    width: 128px;
}
.hidden-count {
    width: 129px;
}
.modes {
    display: flex;
    gap: 5px;
    margin-right: 8px;
}
.modes button {
    display: flex;
    align-items: center;
    justify-content: center;
    gap: 9px;
    height: 31px;
    width: 45px;
    background: #cacaca;
    border: 1px solid #a8a8a8;
}
.modes svg {
    width: 20px;
    height: 20px;
}
.modes [aria-label="正交"], .modes .dim-btn {
    width: 31px;
}
.modes .dim-btn {
    margin: 0 1px;
}
.modes .on {
    background: #fff;
    border: 2px solid #4a9bf0;
}
.modes .word {
    width: auto;
    padding: 0 6px;
}
.fps {
    margin-left: auto;
}

/* floating dialogs */
.dialog {
    position: absolute;
    display: flex;
    flex-direction: column;
    background: #efefef;
    border: 1px solid #b9c3d3;
    border-top: none;
}
.dialog header {
    display: flex;
    align-items: center;
    justify-content: space-between;
    height: 34px;
    flex: none;
    padding: 0 12px 0 11px;
    margin: 0 -1px;
    background: #2d7fe0;
    color: #fff;
}
.close svg {
    display: block;
    width: 10px;
    height: 10px;
}
.back {
    left: 500px;
    top: 210px;
    width: 339px;
    height: 293px;
}
.frame {
    flex: 1;
    display: flex;
    flex-direction: column;
    justify-content: flex-end;
    gap: 9px;
    margin: 25px 14px 16px;
    padding: 0 0 11px 235px;
    border: 1px solid #b4b4b4;
    border-radius: 4px;
    background: #fff;
}
.params {
    left: 35px;
    top: 15px;
    width: 721px;
    height: 584px;
    padding-bottom: 13px;
}
.params-grid {
    display: flex;
    height: 431px;
    margin: 14px 14px 0;
    overflow: hidden;
    background: #fff;
    border: 1px solid #c6c6c6;
}
.params .sheet {
    width: 649px;
}
.params thead th {
    height: 25px;
}
.params .sheet th:first-child {
    width: 28px;
}
.params th:last-child {
    width: 151px;
}
.params .vtrack {
    padding: 108px 4px 0 27px;
}
.params .vtrack i {
    height: 153px;
}
.note {
    flex: 1;
    display: flex;
    justify-content: space-between;
    padding: 8px 33px 0 14px;
    line-height: 22px;
}
.actions {
    display: flex;
    justify-content: flex-end;
    gap: 8px;
    padding: 0 14px;
}
.grip {
    position: absolute;
    right: 4px;
    bottom: 3px;
    width: 11px;
    height: 11px;
}
.expr {
    left: 90px;
    top: 348px;
    width: 478px;
    height: 297px;
    padding-bottom: 13px;
    box-shadow: 3px 4px 5px rgba(0, 0, 0, 0.5);
}
.expr-grid {
    height: 150px;
    margin: 14px 14px 0;
    background: #fff;
    border: 1px solid #c6c6c6;
}
.expr .sheet {
    width: 312px;
}
.expr thead th {
    height: 21px;
}
.expr .sheet th:first-child {
    width: 9px;
}
.expr .sheet th:nth-child(2) {
    width: 139px;
}
.hint {
    flex: 1;
    padding: 17px 14px 0;
}
```
